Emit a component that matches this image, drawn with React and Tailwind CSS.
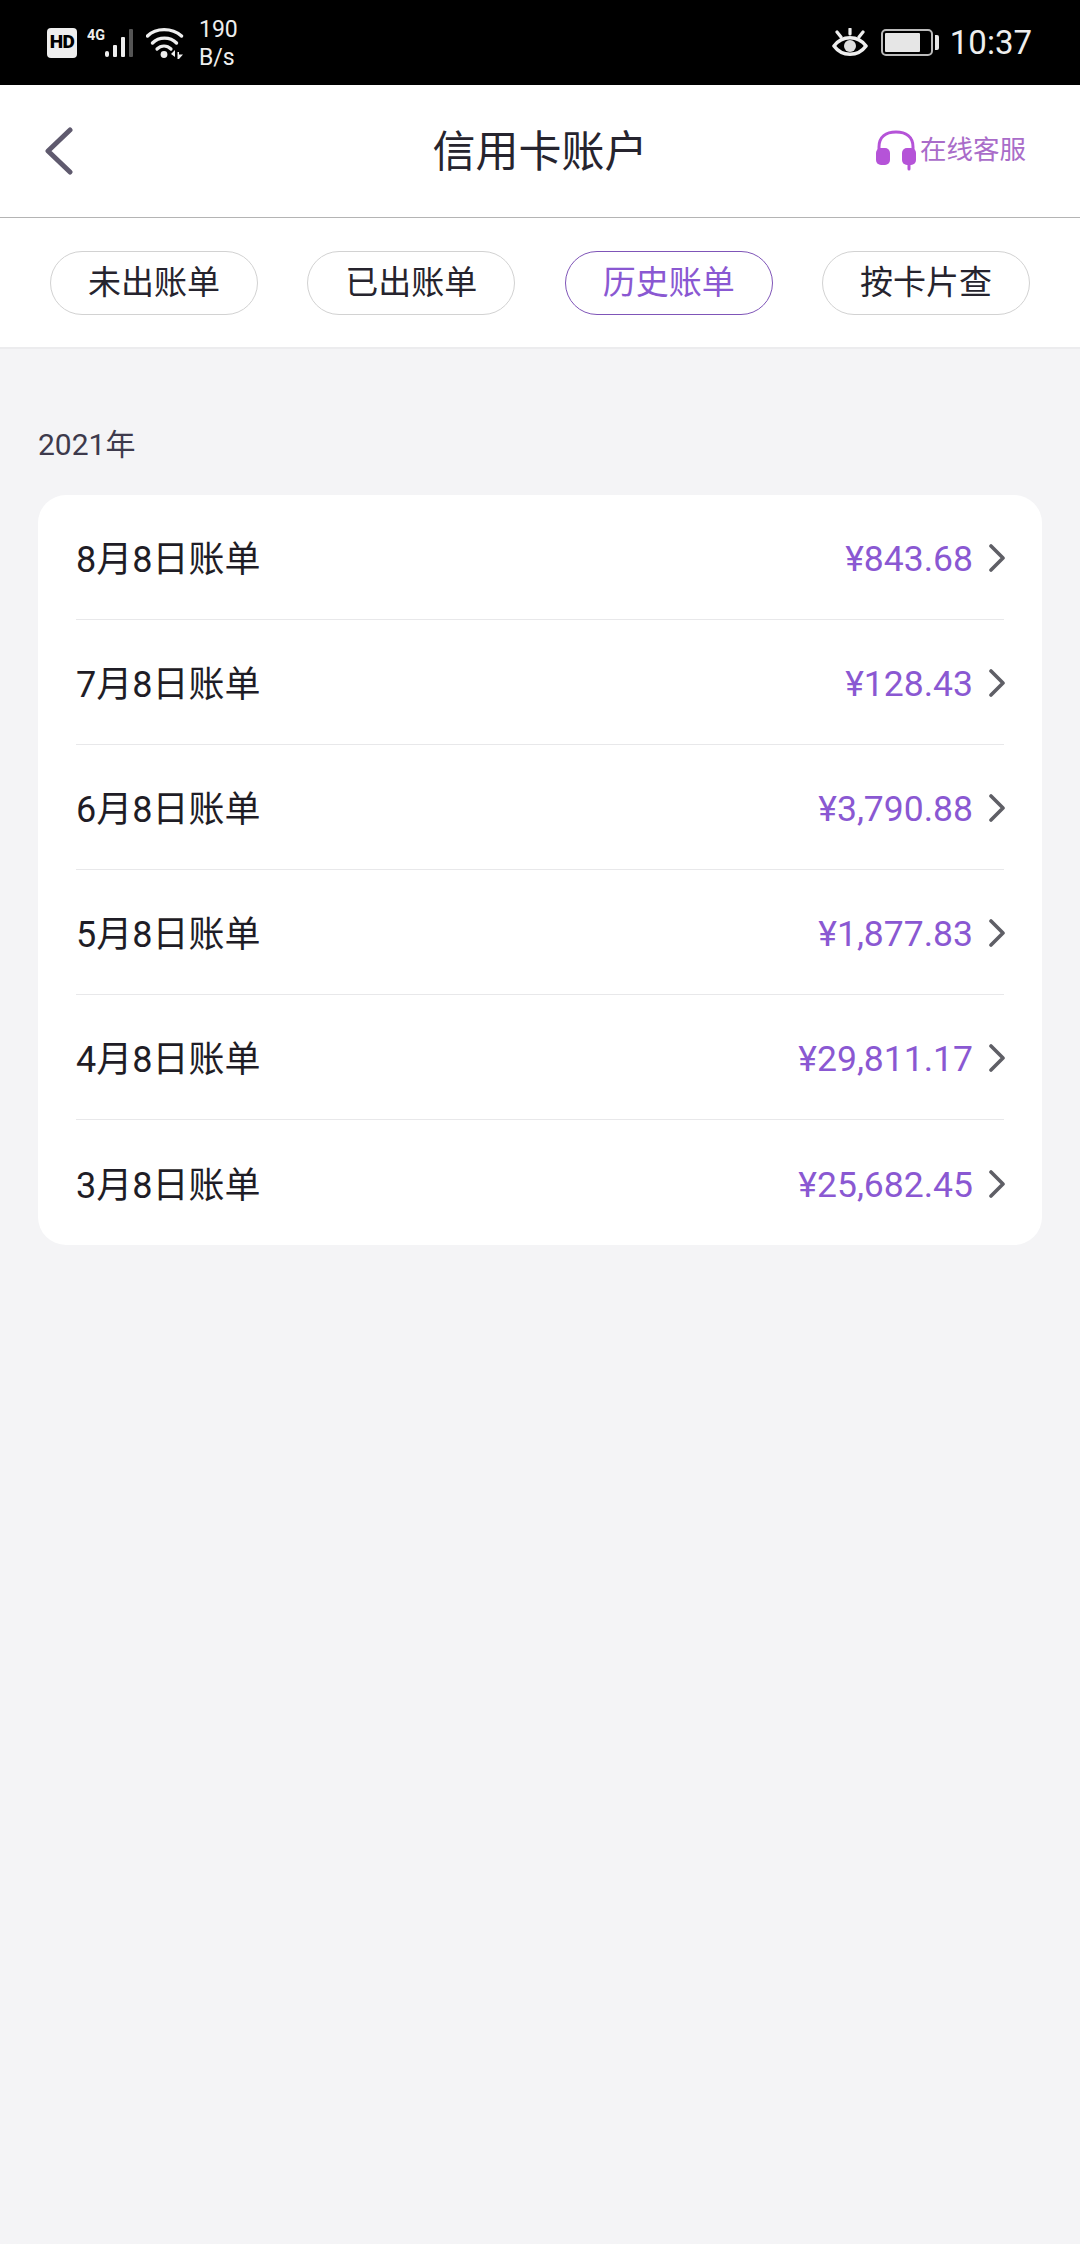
import React from 'react';

const cjk = "font-['Roboto','Noto_Sans_CJK_SC',sans-serif]";

const tabs = [
    { label: '未出账单' },
    { label: '已出账单' },
    { label: '历史账单', active: true },
    { label: '按卡片查' },
];

const bills = [
    { title: '8月8日账单', amount: '¥843.68' },
    { title: '7月8日账单', amount: '¥128.43' },
    { title: '6月8日账单', amount: '¥3,790.88' },
    { title: '5月8日账单', amount: '¥1,877.83' },
    { title: '4月8日账单', amount: '¥29,811.17' },
    { title: '3月8日账单', amount: '¥25,682.45' },
];

const SignalIcon = () => (
    <svg width="52" height="32" viewBox="0 0 52 32" className="ml-[10px]">
        <text x="0" y="13" fill="#eee" fontSize="15" fontWeight="700" fontFamily="Roboto" textLength="18" lengthAdjust="spacingAndGlyphs">4G</text>
        <rect x="18" y="24" width="4" height="6" rx="2" fill="#eee" />
        <rect x="26" y="18" width="4" height="12" rx="1" fill="#eee" />
        <rect x="34" y="10" width="4" height="20" rx="1" fill="#eee" />
        <rect x="42" y="2" width="4" height="28" rx="1" fill="#555" />
    </svg>
);

const WifiIcon = () => (
    <svg width="38" height="32" viewBox="0 0 38 32" className="ml-[7px]" fill="none">
        <path d="M1.5 9 C10 0.5 26 0.5 35.5 9" stroke="#eee" strokeWidth="3.4" strokeLinecap="round" />
        <path d="M6.5 16 C13 9.5 24 9.5 30.5 16" stroke="#eee" strokeWidth="3.4" strokeLinecap="round" />
        <path d="M11 22 C15 18 21 18 25 22" stroke="#eee" strokeWidth="3.2" strokeLinecap="round" />
        <circle cx="18" cy="27.5" r="3.4" fill="#eee" />
        <path d="M29 23 V30 L25 27 Z M31.5 25 V32 H33 L37 27.5 H33 V25 Z" fill="#eee" />
    </svg>
);

const EyeIcon = () => (
    <svg width="36" height="30" viewBox="0 0 36 30" fill="none">
        <path d="M2 18 C10 7 26 7 34 18 C26 29 10 29 2 18 Z" stroke="#eee" strokeWidth="3.6" strokeLinejoin="round" />
        <circle cx="18" cy="18" r="6" fill="#ddd" />
        <path d="M18 1 V6 M5 4 L9 9 M31 4 L27 9" stroke="#eee" strokeWidth="3.2" strokeLinecap="round" />
    </svg>
);

const BatteryIcon = () => (
    <div className="ml-[13px] flex items-center">
        <div className="flex h-[27px] w-[52px] items-center rounded-[5px] border-2 border-[#bbb] p-[2px]">
            <div className="h-full w-[35px] rounded-[1px] bg-[#e6e6e6]" />
        </div>
        <div className="ml-[2px] h-[15px] w-[4px] rounded-r-[2px] bg-[#e6e6e6]" />
    </div>
);

const StatusBar = () => (
    <div className="flex h-[85px] items-center bg-black pl-[47px] pr-[48px] text-[#eee]">
        <span className="flex h-[30px] w-[30px] items-center justify-center rounded-[4px] bg-[#eee] font-['Roboto',sans-serif] text-[19px] font-black tracking-[-0.5px] text-black">HD</span>
        <SignalIcon />
        <WifiIcon />
        <div className="ml-[15px] flex w-[40px] flex-col pt-[3px] font-['Roboto',sans-serif] text-[23px] leading-[28px]">
            <span>190</span>
            <span>B/s</span>
        </div>
        <div className="ml-auto flex items-center">
            <EyeIcon />
            <BatteryIcon />
            <span className="ml-[11px] font-['Roboto',sans-serif] text-[33px] leading-none">10:37</span>
        </div>
    </div>
);

const HeadsetIcon = () => (
    <svg width="42" height="42" viewBox="0 0 42 42" fill="none">
        <path d="M4 22 V17 C4 7 11 2 21 2 C31 2 38 7 38 17 V22" stroke="#b553d8" strokeWidth="3" />
        <rect x="1" y="18" width="14" height="17" rx="5" fill="#b553d8" />
        <rect x="27" y="18" width="14" height="17" rx="5" fill="#b553d8" />
        <path d="M34 34 V39" stroke="#b553d8" strokeWidth="3" strokeLinecap="round" />
    </svg>
);

const Header = () => (
    <div className="flex h-[133px] items-center border-b border-[#b4b4b4] bg-white pl-[45px] pr-[54px]">
        <div className="flex-1">
            <svg width="28" height="48" viewBox="0 0 28 48" fill="none">
                <path d="M25 3 L3 24 L25 45" stroke="#5f5a6e" strokeWidth="5" strokeLinecap="round" strokeLinejoin="round" />
            </svg>
        </div>
        <h1 className={`ml-[9px] pt-[3px] text-[43px] font-normal text-[#26242e] ${cjk}`}>信用卡账户</h1>
        <div className="flex flex-1 items-center justify-end gap-[3px]">
            <HeadsetIcon />
            <span className={`mb-[2px] text-[26.5px] text-[#a96cc9] ${cjk}`}>在线客服</span>
        </div>
    </div>
);

const Tabs = () => (
    <div className="flex h-[131px] items-center justify-between border-b-2 border-[#ececee] bg-white px-[50px]">
        {tabs.map(tab => (
            <div
                key={tab.label}
                className={`flex h-[64px] w-[208px] items-center justify-center rounded-full border text-[33px] ${cjk} ${tab.active ? 'border-[#7f55b8] text-[#8a58d2]' : 'border-[#d2d2d2] text-[#26242e]'}`}
            >
                {tab.label}
            </div>
        ))}
    </div>
);

const Chevron = () => (
    <svg width="16" height="28" viewBox="0 0 16 28" fill="none" className="ml-[16px] mr-[-1px] mb-[4px]">
        <path d="M2 2 L14 14 L2 26" stroke="#5f5f66" strokeWidth="3.6" strokeLinecap="round" strokeLinejoin="round" />
    </svg>
);

const BillRow = ({ title, amount, last }) => (
    <div className={`flex h-[125px] items-center justify-between pt-[6px] ${last ? '' : 'border-b border-[#e8e8ea]'}`}>
        <span className={`text-[36px] text-[#1f1d26] ${cjk}`}>{title}</span>
        <div className="flex items-center">
            <span className={`text-[35.5px] text-[#8a58d2] ${cjk}`}>{amount}</span>
            <Chevron />
        </div>
    </div>
);

export default function App() {
    return (
        <div className="flex min-h-[2244px] w-[1080px] flex-col bg-[#f4f4f6]">
            <StatusBar />
            <Header />
            <Tabs />
            <div className="px-[38px]">
                <p className={`mt-[75px] text-[30px] leading-[42px] text-[#3d3a4c] ${cjk}`}>2021年</p>
                <div className="mt-[29px] rounded-[28px] bg-white px-[38px]">
                    {bills.map((bill, i) => (
                        <BillRow key={bill.title} {...bill} last={i === bills.length - 1} />
                    ))}
                </div>
            </div>
        </div>
    );
}
